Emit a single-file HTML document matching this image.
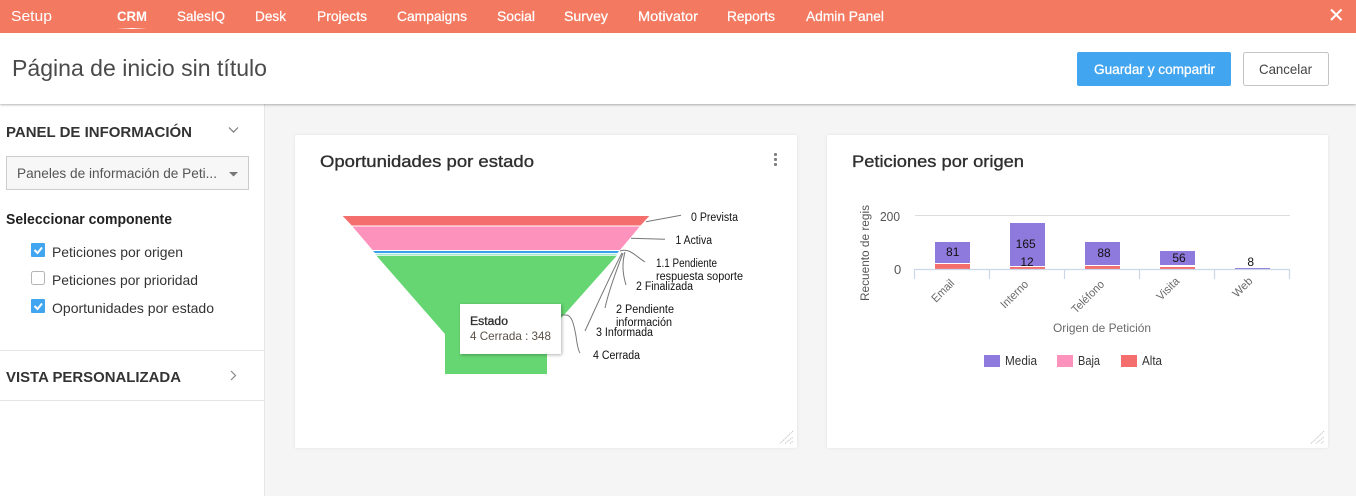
<!DOCTYPE html>
<html lang="es">
<head>
<meta charset="utf-8">
<title>Página de inicio sin título</title>
<style>
html,body{margin:0;padding:0;width:1356px;height:496px;overflow:hidden;background:#f5f5f5}
svg{display:block;font-family:"Liberation Sans",Arial,sans-serif}
.nav{fill:#fff;font-size:14px;stroke:#fff;stroke-width:.25px}
.lab{fill:#111;font-size:11.5px}
.side{fill:#333;font-size:14px}
.head{fill:#333;font-size:15px;font-weight:bold}
.ttl{fill:#2f2f2f;font-size:17px;stroke:#2f2f2f;stroke-width:.35px}
.dl{fill:#111;font-size:12px;text-anchor:middle}
.ax{fill:#6a6a6a;font-size:11.5px}
.leg{fill:#333;font-size:12.5px}
</style>
</head>
<body>
<svg width="1356" height="496" viewBox="0 0 1356 496" xmlns="http://www.w3.org/2000/svg">
<defs>
<linearGradient id="ul" x1="0" x2="1" y1="0" y2="0">
<stop offset="0" stop-color="#fff" stop-opacity="0"/><stop offset=".5" stop-color="#fff"/><stop offset="1" stop-color="#fff" stop-opacity="0"/>
</linearGradient>
<filter id="hs" x="-5%" y="-20%" width="110%" height="140%"><feDropShadow dx="0" dy="1" stdDeviation="1" flood-color="#000" flood-opacity=".3"/></filter>
<filter id="cs" x="-3%" y="-3%" width="106%" height="106%"><feDropShadow dx="0" dy="0" stdDeviation="1.5" flood-color="#000" flood-opacity=".08"/></filter>
<filter id="ts" x="-10%" y="-20%" width="120%" height="140%"><feDropShadow dx="1" dy="1" stdDeviation="1.5" flood-color="#000" flood-opacity=".3"/></filter>
</defs>

<!-- page -->
<rect width="1356" height="496" fill="#f5f5f5"/>
<rect x="0" y="104" width="264" height="392" fill="#fff"/>
<rect x="264" y="104" width="1" height="392" fill="#e6e6e6"/>

<!-- header -->
<rect x="0" y="33" width="1356" height="71" fill="#fff" filter="url(#hs)"/>
<rect x="0" y="0" width="1356" height="33" fill="#f37a61"/>
<text x="11" y="21" fill="#fff" font-size="14.5" textLength="41" lengthAdjust="spacingAndGlyphs">Setup</text>
<text x="117" y="21" class="nav" font-weight="bold" style="stroke-width:0" textLength="30" lengthAdjust="spacingAndGlyphs">CRM</text>
<rect x="117" y="28" width="30" height="1" fill="url(#ul)"/>
<text x="177" y="21" class="nav" textLength="48" lengthAdjust="spacingAndGlyphs">SalesIQ</text>
<text x="255" y="21" class="nav" textLength="31" lengthAdjust="spacingAndGlyphs">Desk</text>
<text x="317" y="21" class="nav" textLength="50" lengthAdjust="spacingAndGlyphs">Projects</text>
<text x="397" y="21" class="nav" textLength="70" lengthAdjust="spacingAndGlyphs">Campaigns</text>
<text x="497" y="21" class="nav" textLength="38" lengthAdjust="spacingAndGlyphs">Social</text>
<text x="564" y="21" class="nav" textLength="44" lengthAdjust="spacingAndGlyphs">Survey</text>
<text x="638" y="21" class="nav" textLength="60" lengthAdjust="spacingAndGlyphs">Motivator</text>
<text x="727" y="21" class="nav" textLength="48" lengthAdjust="spacingAndGlyphs">Reports</text>
<text x="806" y="21" class="nav" textLength="78" lengthAdjust="spacingAndGlyphs">Admin Panel</text>
<path d="M1331 9.500L1341.500 20M1341.500 9.500L1331 20" stroke="#fff" stroke-width="2" fill="none"/>

<text x="12" y="76" fill="#4a4a4a" font-size="23" textLength="255" lengthAdjust="spacingAndGlyphs">Página de inicio sin título</text>

<rect x="1077" y="52" width="154" height="34" rx="2" fill="#42a5f0"/>
<text x="1094" y="74" fill="#fff" font-size="14" stroke="#fff" stroke-width=".3" textLength="121" lengthAdjust="spacingAndGlyphs">Guardar y compartir</text>
<rect x="1243.500" y="52.500" width="85" height="33" rx="2" fill="#fff" stroke="#c4c4c4"/>
<text x="1259" y="74" fill="#444" font-size="14" textLength="53" lengthAdjust="spacingAndGlyphs">Cancelar</text>

<!-- sidebar -->
<text x="6" y="137" class="head" textLength="186" lengthAdjust="spacingAndGlyphs">PANEL DE INFORMACIÓN</text>
<path d="M229 127.500L233.500 132L238 127.500" stroke="#777" stroke-width="1.200" fill="none"/>
<rect x="6.500" y="156.500" width="242" height="33" fill="#f7f7f7" stroke="#ccc"/>
<text x="17" y="178" fill="#555" font-size="14" textLength="200" lengthAdjust="spacingAndGlyphs">Paneles de información de Peti...</text>
<path d="M229 172H238L233.500 176.500Z" fill="#777"/>
<text x="6" y="224" fill="#222" font-size="14.500" font-weight="bold" textLength="166" lengthAdjust="spacingAndGlyphs">Seleccionar componente</text>

<rect x="31" y="243" width="14" height="14" rx="1" fill="#42a5f0"/>
<path d="M34.500 250L37.500 253L42 247.500" stroke="#fff" stroke-width="2" fill="none"/>
<text x="52" y="257" class="side" textLength="131" lengthAdjust="spacingAndGlyphs">Peticiones por origen</text>
<rect x="31.500" y="271.500" width="13" height="13" rx="2" fill="#fff" stroke="#b5b5b5"/>
<text x="52" y="285" class="side" textLength="146" lengthAdjust="spacingAndGlyphs">Peticiones por prioridad</text>
<rect x="31" y="299" width="14" height="14" rx="1" fill="#42a5f0"/>
<path d="M34.500 306L37.500 309L42 303.500" stroke="#fff" stroke-width="2" fill="none"/>
<text x="52" y="313" class="side" textLength="162" lengthAdjust="spacingAndGlyphs">Oportunidades por estado</text>

<rect x="0" y="350" width="264" height="1" fill="#e6e6e6"/>
<text x="6" y="382" class="head" textLength="175" lengthAdjust="spacingAndGlyphs">VISTA PERSONALIZADA</text>
<path d="M231 371L235.500 375.500L231 380" stroke="#888" stroke-width="1.200" fill="none"/>
<rect x="0" y="400" width="264" height="1" fill="#e6e6e6"/>

<!-- cards -->
<rect x="295" y="135" width="502" height="313" rx="2" fill="#fff" filter="url(#cs)"/>
<rect x="827" y="135" width="501" height="313" rx="2" fill="#fff" filter="url(#cs)"/>
<text x="320" y="167" class="ttl" textLength="214" lengthAdjust="spacingAndGlyphs">Oportunidades por estado</text>
<text x="852" y="167" class="ttl" textLength="172" lengthAdjust="spacingAndGlyphs">Peticiones por origen</text>
<g fill="#808080">
<rect x="774" y="153" width="3" height="3" rx="1"/>
<rect x="774" y="158" width="3" height="3" rx="1"/>
<rect x="774" y="163" width="3" height="3" rx="1"/>
</g>
<g stroke="#c9c9c9" stroke-width="1" stroke-dasharray="1.400 .7" fill="none">
<path d="M780 443.500L793 431M785 443.500L793 437M790 443.500L793 441"/>
<path d="M1311 443.500L1324 431M1316 443.500L1324 437M1321 443.500L1324 441"/>
</g>

<!-- funnel -->
<path d="M342.700 216H649.300L640.500 225.500H351.700Z" fill="#f46e6e"/>
<path d="M352.500 226.500H639.800L620 250H372.500Z" fill="#fd92bd"/>
<path d="M373 251H619L617.500 253H375Z" fill="#3aa0e8"/>
<path d="M375.500 253.800H617L616.500 255H376Z" fill="#a8e8d8"/>
<path d="M376.500 255.700H616.700L547 334V374H445V334Z" fill="#65d672"/>

<g stroke="#777" stroke-width="1" fill="none">
<path d="M646 221.700L681 215.300"/>
<path d="M631 238.300L665 239.300"/>
<path d="M620 251C630 248 634 255 645 262"/>
<path d="M625 252C622 262 622 272 626 285"/>
<path d="M623 253C616 272 609 290 605 308"/>
<path d="M622 253C608 280 597 305 585 331"/>
<path d="M561 315H566C572 315 574 325 576 336C577 344 578 350 580 353"/>
</g>

<text x="691" y="221" class="lab" textLength="47" lengthAdjust="spacingAndGlyphs">0 Prevista</text>
<text x="675.500" y="244" class="lab" textLength="36.500" lengthAdjust="spacingAndGlyphs">1 Activa</text>
<text x="656" y="267" class="lab" textLength="61" lengthAdjust="spacingAndGlyphs">1.1 Pendiente</text>
<text x="656" y="280" class="lab" textLength="87" lengthAdjust="spacingAndGlyphs">respuesta soporte</text>
<text x="636" y="290" class="lab" textLength="57" lengthAdjust="spacingAndGlyphs">2 Finalizada</text>
<text x="616" y="313" class="lab" textLength="58" lengthAdjust="spacingAndGlyphs">2 Pendiente</text>
<text x="616" y="326" class="lab" textLength="56" lengthAdjust="spacingAndGlyphs">información</text>
<text x="596" y="336" class="lab" textLength="57" lengthAdjust="spacingAndGlyphs">3 Informada</text>
<text x="593" y="359" class="lab" textLength="47" lengthAdjust="spacingAndGlyphs">4 Cerrada</text>

<rect x="460" y="304" width="101" height="50" fill="#fff" filter="url(#ts)"/>
<text x="470" y="325" fill="#2f2f2f" font-size="11.500" stroke="#2f2f2f" stroke-width=".3" textLength="38" lengthAdjust="spacingAndGlyphs">Estado</text>
<text x="470" y="340" fill="#5a5048" font-size="12" textLength="81" lengthAdjust="spacingAndGlyphs">4 Cerrada : 348</text>

<!-- bar chart -->
<rect x="915" y="215" width="375" height="1" fill="#ddd"/>
<text x="880" y="221" fill="#555" font-size="13" textLength="20" lengthAdjust="spacingAndGlyphs">200</text>
<text x="894" y="274" fill="#555" font-size="13">0</text>
<text transform="translate(869 301) rotate(-90)" fill="#555" font-size="11.500" textLength="96" lengthAdjust="spacingAndGlyphs">Recuento de regis</text>

<g fill="#8e79dc">
<rect x="935" y="242" width="35" height="21"/>
<rect x="1010" y="223" width="35" height="43"/>
<rect x="1085" y="242" width="35" height="23"/>
<rect x="1160" y="251" width="35" height="14"/>
<rect x="1235" y="268" width="35" height="1.500"/>
</g>
<g fill="#f46e6e">
<rect x="935" y="264" width="35" height="5.500"/>
<rect x="1010" y="267" width="35" height="2.500"/>
<rect x="1085" y="266" width="35" height="3.500"/>
<rect x="1160" y="267" width="35" height="2.500"/>
</g>
<path d="M914 269.500H1290M914.500 269V279M989.500 269V279M1064.500 269V279M1139.500 269V279M1214.500 269V279M1289.500 269V279" stroke="#c9d7e6" stroke-width="1.200" fill="none"/>

<text x="952.700" y="256" class="dl">81</text>
<text x="1025.700" y="248" class="dl">165</text>
<text x="1027" y="266" class="dl">12</text>
<text x="1104" y="257" class="dl">88</text>
<text x="1179" y="262" class="dl">56</text>
<text x="1250.700" y="266" class="dl">8</text>

<text transform="translate(936 303) rotate(-45)" class="ax" textLength="27" lengthAdjust="spacingAndGlyphs">Email</text>
<text transform="translate(1005 309) rotate(-45)" class="ax" textLength="34" lengthAdjust="spacingAndGlyphs">Interno</text>
<text transform="translate(1076 314) rotate(-45)" class="ax" textLength="41" lengthAdjust="spacingAndGlyphs">Teléfono</text>
<text transform="translate(1161 301) rotate(-45)" class="ax" textLength="27" lengthAdjust="spacingAndGlyphs">Visita</text>
<text transform="translate(1237 298) rotate(-45)" class="ax" textLength="23" lengthAdjust="spacingAndGlyphs">Web</text>
<text x="1053" y="332" class="ax" style="font-size:12px" textLength="98" lengthAdjust="spacingAndGlyphs">Origen de Petición</text>

<rect x="984" y="355" width="16" height="12" fill="#8e79dc"/>
<text x="1005" y="365" class="leg" textLength="32" lengthAdjust="spacingAndGlyphs">Media</text>
<rect x="1057" y="355" width="16" height="12" fill="#fd92bd"/>
<text x="1078" y="365" class="leg" textLength="22" lengthAdjust="spacingAndGlyphs">Baja</text>
<rect x="1121" y="355" width="16" height="12" fill="#f46e6e"/>
<text x="1142" y="365" class="leg" textLength="20" lengthAdjust="spacingAndGlyphs">Alta</text>
</svg>
</body>
</html>
